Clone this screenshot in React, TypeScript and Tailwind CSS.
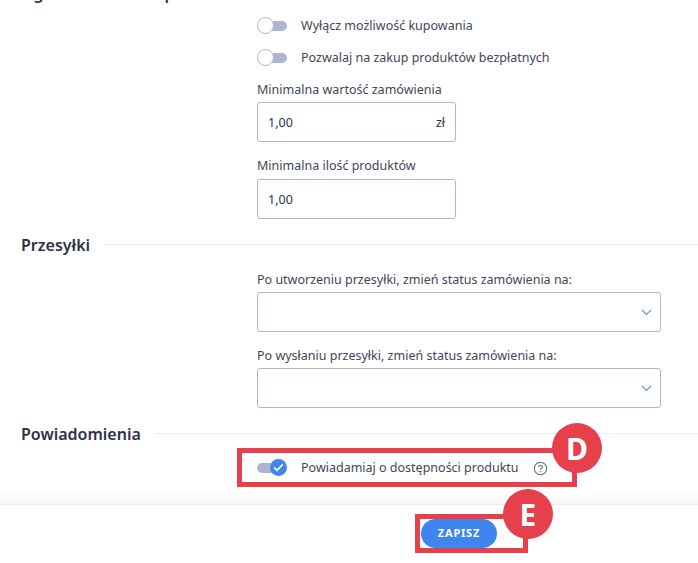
function Toggle({ on = false }: { on?: boolean }) {
  return (
    <span className="relative block w-[30px] h-[17px] shrink-0">
      <span className={"absolute top-[4px] w-[24px] h-[10px] rounded-full bg-[#adb5d1] " + (on ? "left-0" : "right-0")} />
      {on ? (
        <span className="absolute right-0 top-0 w-[17px] h-[17px] rounded-full bg-[#3f85ee] flex items-center justify-center">
          <svg width="11" height="9" viewBox="0 0 11 9" fill="none">
            <path d="M1.2 4.6 4 7.4 9.8 1.4" stroke="#fff" strokeWidth="1.6" />
          </svg>
        </span>
      ) : (
        <span className="absolute left-0 top-0 w-[17px] h-[17px] rounded-full bg-white border border-[#adb5d1]" />
      )}
    </span>
  );
}

function Chevron() {
  return (
    <svg width="11" height="7" viewBox="0 0 11 7" fill="none">
      <path d="M1 1l4.5 4.5L10 1" stroke="#5b93e8" strokeWidth="1.1" />
    </svg>
  );
}

function Select({ label }: { label: string }) {
  return (
    <div className="ml-[257px] mr-[37px]">
      <label className="block text-[12.5px] leading-[18px] text-[#3f4658]">{label}</label>
      <div className="mt-[3px] h-[40px] rounded-[3px] border border-[#adb5d1] bg-white flex items-center justify-end pr-[8px]">
        <Chevron />
      </div>
    </div>
  );
}

function Section({ title }: { title: string }) {
  return (
    <div className="flex items-center gap-[14px] pl-[21px]">
      <h2 className="text-[16px] leading-[20px] font-semibold text-[#2d3345] translate-y-px">{title}</h2>
      <div className="flex-1 h-px bg-[#ebedf0]" />
    </div>
  );
}

function Badge({ letter, className }: { letter: string; className: string }) {
  return (
    <span className={"absolute w-[50px] h-[50px] rounded-full bg-[#e5404b] text-white text-[30px] font-bold flex items-center justify-center " + className}>
      {letter}
    </span>
  );
}

export default function App() {
  return (
    <div className="w-[698px] h-[563px] overflow-hidden bg-white font-['Noto_Sans',sans-serif]">
      <div className="-mt-[18px]">
        <Section title="Ograniczenia zakupu" />
      </div>
      <div className="mt-[15px] ml-[257px] flex items-center gap-[14px] h-[17px]">
        <Toggle />
        <span className="text-[12.5px] text-[#3f4658] translate-y-px">Wyłącz możliwość kupowania</span>
      </div>
      <div className="mt-[15px] ml-[257px] flex items-center gap-[14px] h-[17px]">
        <Toggle />
        <span className="text-[12.5px] text-[#3f4658] translate-y-px">Pozwalaj na zakup produktów bezpłatnych</span>
      </div>
      <div className="mt-[15px] ml-[257px] w-[199px]">
        <label className="block text-[12.5px] leading-[18px] text-[#3f4658]">Minimalna wartość zamówienia</label>
        <div className="mt-[3px] h-[40px] rounded-[3px] border border-[#adb5d1] flex items-center justify-between px-[10px] pt-[2px] text-[12.5px] text-[#2d3345]">
          <span>1,00</span>
          <span>zł</span>
        </div>
      </div>
      <div className="mt-[15px] ml-[257px] w-[199px]">
        <label className="block text-[12.5px] leading-[18px] text-[#3f4658]">Minimalna ilość produktów</label>
        <div className="mt-[4px] h-[40px] rounded-[3px] border border-[#adb5d1] flex items-center px-[10px] pt-[2px] text-[12.5px] text-[#2d3345]">
          <span>1,00</span>
        </div>
      </div>
      <div className="mt-[15px]">
        <Section title="Przesyłki" />
      </div>
      <div className="mt-[17px]">
        <Select label="Po utworzeniu przesyłki, zmień status zamówienia na:" />
      </div>
      <div className="mt-[15px]">
        <Select label="Po wysłaniu przesyłki, zmień status zamówienia na:" />
      </div>
      <div className="mt-[15px]">
        <Section title="Powiadomienia" />
      </div>
      <div className="relative mt-[5px] ml-[237px] w-[340px] h-[39px] border-[5px] border-[#e5404b] flex items-center pl-[15px] gap-[14px]">
        <Toggle on />
        <span className="text-[12.5px] text-[#3f4658] translate-y-px">Powiadamiaj o dostępności produktu</span>
        <svg className="translate-y-px" width="15" height="15" viewBox="0 0 15 15" fill="none">
          <circle cx="7.5" cy="7.5" r="6.2" stroke="#5f6a8a" strokeWidth="1.1" />
          <path d="M5.6 6c0-1 .8-1.7 1.9-1.7s1.9.7 1.9 1.6c0 1.3-1.9 1.3-1.9 2.6" stroke="#5f6a8a" strokeWidth="1.1" />
          <circle cx="7.5" cy="10.6" r=".7" fill="#5f6a8a" />
        </svg>
        <Badge letter="D" className="-right-[30px] -top-[30px]" />
      </div>
      <div className="mt-[3px] h-[14px] bg-gradient-to-b from-white to-[#f6f6f8]" />
      <div className="border-t border-[#ebedf0] pt-[9px]">
        <div className="relative ml-[415px] w-[113px] h-[39px] border-[5px] border-[#e5404b] pl-px">
          <button className="w-[76px] h-[29px] rounded-full bg-[#3f85ee] text-white text-[11px] font-bold tracking-[0.8px]">ZAPISZ</button>
          <Badge letter="E" className="-right-[30px] -top-[30px]" />
        </div>
      </div>
    </div>
  );
}
